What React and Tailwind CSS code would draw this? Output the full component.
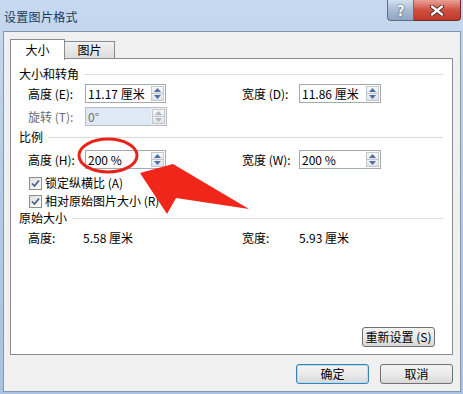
import React from 'react'

const ui = "font-['Noto_Sans_CJK_SC','Liberation_Sans',sans-serif]"

function Spinner({ disabled }) {
  const fill = disabled ? '#b4b8bd' : '#4e6ea8'
  return (
    <div className="flex flex-col w-[13px] my-px mr-px border border-[#c3c8cf]">
      <div className="flex-1 flex items-center justify-center bg-gradient-to-b from-[#fafafa] to-[#e6e8eb] border-b border-[#c3c8cf]">
        <svg width="7" height="4" viewBox="0 0 7 4"><path d="M0 4 L3.5 0 L7 4Z" fill={fill} /></svg>
      </div>
      <div className="flex-1 flex items-center justify-center bg-gradient-to-b from-[#f1f2f4] to-[#dfe2e6]">
        <svg width="7" height="4" viewBox="0 0 7 4"><path d="M0 0 L3.5 4 L7 0Z" fill={fill} /></svg>
      </div>
    </div>
  )
}

function Field({ value, disabled, width = 'w-[81px]' }) {
  return (
    <div className={`${width} h-[19px] border flex items-stretch ${disabled ? 'border-[#b9bec5] bg-[#eef0f2]' : 'border-[#a3a9b1] bg-white'}`}>
      <div className={`flex-1 pl-[2px] flex items-center text-[12px] leading-none ${disabled ? 'text-[#6d6d6d] bg-[#dfe9f5] mr-[1px]' : 'text-black'}`}>
        {value}
      </div>
      <Spinner disabled={disabled} />
    </div>
  )
}

function Label({ children, disabled }) {
  return (
    <div className={`w-[57px] shrink-0 text-[12px] leading-[16px] ${disabled ? 'text-[#6d6d6d]' : 'text-black'}`}>
      {children}
    </div>
  )
}

function Section({ title, className = '' }) {
  return (
    <div className={`flex items-center pl-[8px] pr-[9px] h-[16px] ${className}`}>
      <span className="text-[12px] leading-[16px] text-black">{title}</span>
      <div className="flex-1 h-px bg-[#d5dce4] ml-[5px]" />
    </div>
  )
}

function Check({ label, className = '' }) {
  return (
    <div className={`flex items-center pl-[18px] h-[16px] ${className}`}>
      <div className="w-[13px] h-[13px] border border-[#8e8f8f] bg-gradient-to-br from-[#dedede] to-white flex items-center justify-center">
        <svg width="9" height="9" viewBox="0 0 9 9">
          <path d="M1 4.5 L3.5 7 L8 1.5" stroke="#4a5f86" strokeWidth="1.7" fill="none" />
        </svg>
      </div>
      <span className="ml-[3px] text-[12px] leading-[16px] text-black">{label}</span>
    </div>
  )
}

function Btn({ children, primary, className = '' }) {
  return (
    <div
      className={`h-[20px] rounded-[3px] border flex items-center justify-center text-[12px] leading-none text-black bg-gradient-to-b from-[#f3f3f3] via-[#ebebeb] to-[#d8d8d8] ${
        primary ? 'border-[#3c7fb1] shadow-[inset_0_0_0_1px_#aee1f7]' : 'border-[#707070]'
      } ${className}`}
    >
      {children}
    </div>
  )
}

export default function App() {
  return (
    <div className={`${ui} w-[463px] h-[394px] overflow-hidden bg-gradient-to-b from-[#c6d9ee] via-[#b3cbe6] to-[#a9c3e1] flex flex-col`}>
      {/* title bar */}
      <div className="h-[31px] flex items-start shrink-0">
        <div className="flex-1 pl-[4px] pt-[9px] text-[12px] leading-[16px] tracking-[0.3px] text-[#1e395b]">设置图片格式</div>
        <div className="flex mr-[2px]">
          <div className="w-[27px] h-[21px] rounded-bl-[4px] border border-t-0 border-[#5d6f86] bg-gradient-to-b from-[#d4e1ef] via-[#a9bcd3] to-[#8ea5c1] flex items-center justify-center text-white font-bold text-[14px] leading-none [text-shadow:0_0_2px_#334]">
            ?
          </div>
          <div className="w-[47px] h-[21px] rounded-br-[4px] border border-l-0 border-t-0 border-[#6b2a26] bg-gradient-to-b from-[#e8a196] via-[#cf4f3f] to-[#c2382a] flex items-center justify-center">
            <svg width="14" height="11" viewBox="0 0 14 11">
              <path d="M2 1.5 L12 9.5 M12 1.5 L2 9.5" stroke="#3a1c1a" strokeWidth="4" strokeLinecap="round" />
              <path d="M2 1.5 L12 9.5 M12 1.5 L2 9.5" stroke="#fff" strokeWidth="2.4" strokeLinecap="round" />
            </svg>
          </div>
        </div>
      </div>

      {/* client area */}
      <div className="ml-[3px] w-[458px] h-[361px] bg-[#f0f0f0] border border-[#8796a8] flex flex-col pl-[6px] pt-[6px]">
        {/* tabs */}
        <div className="flex items-end h-[21px] relative z-10">
          <div className="w-[55px] h-[21px] bg-white border border-b-0 border-[#898c95] flex items-center justify-center text-[12px] leading-none text-black pb-[1px] -mb-px">
            大小
          </div>
          <div className="w-[50px] h-[18px] border border-l-0 border-[#898c95] bg-gradient-to-b from-[#f2f2f2] to-[#dcdcdc] flex items-center justify-center text-[12px] leading-none text-black">
            图片
          </div>
        </div>

        {/* panel */}
        <div className="relative w-[443px] h-[297px] bg-white border border-[#898c95] -mt-px flex flex-col">
          <Section title="大小和转角" className="mt-[7px]" />
          <div className="flex items-center pl-[17px] mt-[2px]">
            <div className="w-[214px] flex items-center">
              <Label>高度 (E):</Label>
              <Field value="11.17 厘米" />
            </div>
            <Label>宽度 (D):</Label>
            <Field value="11.86 厘米" width="w-[82px]" />
          </div>
          <div className="flex items-center pl-[17px] mt-[4px]">
            <Label disabled>旋转 (T):</Label>
            <Field value="0°" disabled width="w-[82px]" />
          </div>

          <Section title="比例" className="mt-[3px]" />
          <div className="flex items-center pl-[17px] mt-[5px]">
            <div className="w-[214px] flex items-center">
              <Label>高度 (H):</Label>
              <Field value="200 %" />
            </div>
            <Label>宽度 (W):</Label>
            <Field value="200 %" width="w-[82px]" />
          </div>
          <Check label="锁定纵横比 (A)" className="mt-[6px]" />
          <Check label="相对原始图片大小 (R)" className="mt-[2px]" />

          <Section title="原始大小" className="mt-[1px]" />
          <div className="flex items-center pl-[17px] mt-[4px] text-[12px] leading-[16px] text-black">
            <div className="w-[214px] flex">
              <span className="w-[55px]">高度:</span>
              <span>5.58 厘米</span>
            </div>
            <span className="w-[57px]">宽度:</span>
            <span>5.93 厘米</span>
          </div>

          <div className="mt-auto mb-[7px] mr-[17px] self-end">
            <Btn className="w-[73px]">重新设置 (S)</Btn>
          </div>

          {/* annotation overlay */}
          <svg className="absolute -left-[11px] -top-[59px] pointer-events-none" width="463" height="394" viewBox="0 0 463 394">
            <ellipse cx="108" cy="155.5" rx="29" ry="16.5" fill="none" stroke="#e8231a" strokeWidth="3" />
            <polygon points="140,173 173,164 249,209 176,198 167,214" fill="#f0261a" />
          </svg>
        </div>

        {/* dialog buttons */}
        <div className="flex w-[443px] justify-end mt-[9px] gap-[11px]">
          <Btn primary className="w-[73px]">确定</Btn>
          <Btn className="w-[73px]">取消</Btn>
        </div>
      </div>
    </div>
  )
}
